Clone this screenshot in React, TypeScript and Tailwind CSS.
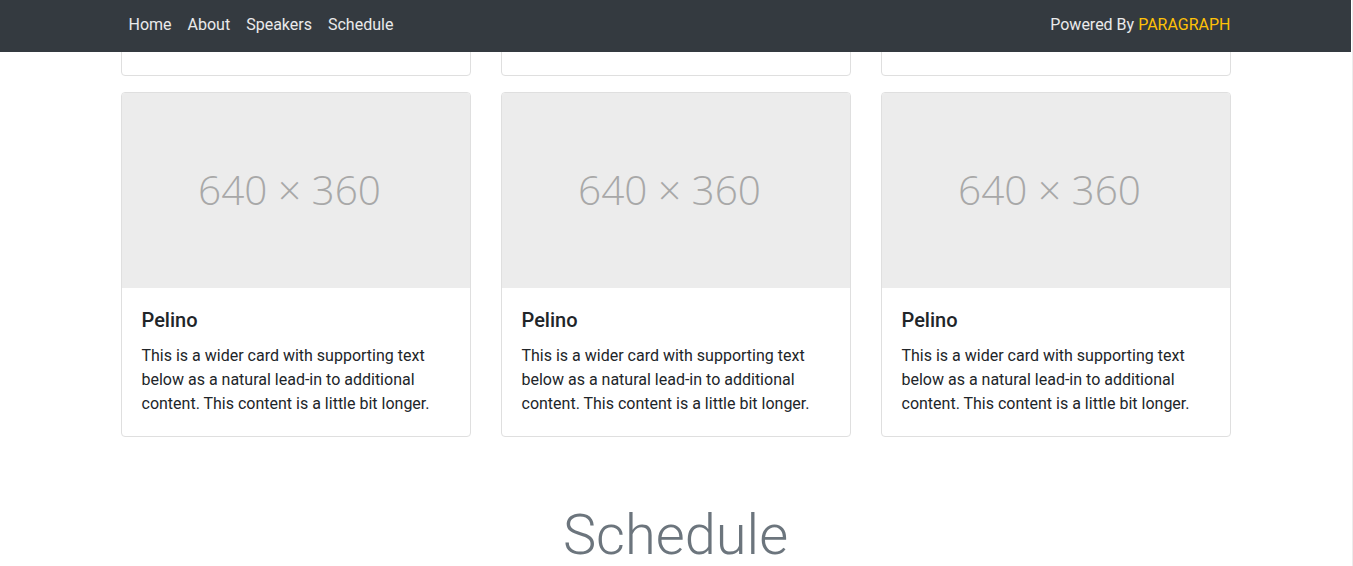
import React from "react";

const text =
  "This is a wider card with supporting text below as a natural lead-in to additional content. This content is a little bit longer.";

function Card() {
  return (
    <div className="flex flex-col bg-white border border-[#dfdfdf] rounded-[4px] overflow-hidden">
      <div className="h-[195px] bg-[#ececec] flex items-center justify-center">
        <span
          className="text-[40.5px] font-light text-[#a8a8a8] -ml-[12px]"
          style={{ fontFamily: '"Open Sans", "Noto Sans", sans-serif' }}
        >
          640 × 360
        </span>
      </div>
      <div className="p-5">
        <h5 className="text-[20px] leading-[1.2] font-medium text-[#212529] mb-3">Pelino</h5>
        <p className="text-[16px] leading-6 text-[#212529]">{text}</p>
      </div>
    </div>
  );
}

export default function App() {
  return (
    <div
      className="w-[1353px] h-[566px] overflow-hidden bg-white flex"
      style={{ fontFamily: 'Roboto, "Liberation Sans", sans-serif' }}
    >
      <div className="w-[1351px] relative">
        <nav className="absolute top-0 left-0 right-0 h-[52px] bg-[#343a40] z-10">
          <div className="w-[1110px] mx-auto h-full flex items-center justify-between pb-[2px]">
            <ul className="flex text-[16px] text-white/90">
              <li className="px-2">Home</li>
              <li className="px-2">About</li>
              <li className="px-2">Speakers</li>
              <li className="px-2">Schedule</li>
            </ul>
            <div className="text-[16px] text-white/90">
              Powered By <span className="text-[#ffc107]">PARAGRAPH</span>
            </div>
          </div>
        </nav>
        <main className="w-[1110px] mx-auto">
          <div className="grid grid-cols-3 gap-[30px]">
            <div className="h-[76px] border border-[#dfdfdf] rounded-b-[4px] bg-white" />
            <div className="h-[76px] border border-[#dfdfdf] rounded-b-[4px] bg-white" />
            <div className="h-[76px] border border-[#dfdfdf] rounded-b-[4px] bg-white" />
          </div>
          <div className="grid grid-cols-3 gap-[30px] mt-4">
            <Card />
            <Card />
            <Card />
          </div>
          <h2 className="mt-[65px] text-center text-[56px] leading-[1.2] font-light text-[#6c757d]">
            Schedule
          </h2>
        </main>
      </div>
      <div className="w-[2px] bg-[#ececec] border-l border-white" />
    </div>
  );
}
